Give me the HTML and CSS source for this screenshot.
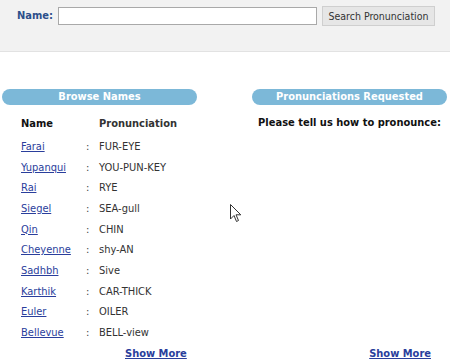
FILE: index.html
```html
<!DOCTYPE html>
<html>
<head>
<meta charset="utf-8">
<link rel="stylesheet" href="styles.css">
</head>
<body>
<div class="header">
  <label class="name-label">Name:</label>
  <input class="name-input" type="text">
  <button class="search-btn">Search Pronunciation</button>
</div>
<div class="main">
  <div class="col left">
    <div class="pill">Browse Names</div>
    <div class="list">
      <div class="row head"><span class="c1">Name</span><span class="c2"></span><span class="c3">Pronunciation</span></div>
      <div class="row"><a class="c1" href="#">Farai</a><span class="c2">:</span><span class="c3">FUR-EYE</span></div>
      <div class="row"><a class="c1" href="#">Yupanqui</a><span class="c2">:</span><span class="c3">YOU-PUN-KEY</span></div>
      <div class="row"><a class="c1" href="#">Rai</a><span class="c2">:</span><span class="c3">RYE</span></div>
      <div class="row"><a class="c1" href="#">Siegel</a><span class="c2">:</span><span class="c3">SEA-gull</span></div>
      <div class="row"><a class="c1" href="#">Qin</a><span class="c2">:</span><span class="c3">CHIN</span></div>
      <div class="row"><a class="c1" href="#">Cheyenne</a><span class="c2">:</span><span class="c3">shy-AN</span></div>
      <div class="row"><a class="c1" href="#">Sadhbh</a><span class="c2">:</span><span class="c3">Sive</span></div>
      <div class="row"><a class="c1" href="#">Karthik</a><span class="c2">:</span><span class="c3">CAR-THICK</span></div>
      <div class="row"><a class="c1" href="#">Euler</a><span class="c2">:</span><span class="c3">OILER</span></div>
      <div class="row"><a class="c1" href="#">Bellevue</a><span class="c2">:</span><span class="c3">BELL-view</span></div>
    </div>
    <div class="more left-more"><a href="#">Show More</a></div>
  </div>
  <div class="col right">
    <div class="pill">Pronunciations Requested</div>
    <div class="please">Please tell us how to pronounce:</div>
    <div class="more right-more"><a href="#">Show More</a></div>
  </div>
</div>
<svg class="cursor" width="12" height="19" viewBox="0 0 12 19"><path d="M0.5 0.5 L0.5 15 L4 11.5 L6.5 17.5 L8.5 16.5 L6 10.8 L10.8 10.8 Z" fill="#fff" stroke="#333" stroke-width="1"/></svg>
</body>
</html>
```
FILE: styles.css
```css
html, body { margin: 0; padding: 0; }
body {
  background: #fff;
  font-family: "DejaVu Sans Condensed", "DejaVu Sans", sans-serif;
  font-size: 11px;
  color: #222;
  width: 450px;
  height: 362px;
  overflow: hidden;
  position: relative;
}
.header {
  background: #f2f2f2;
  height: 52px;
  border-bottom: 1px solid #e2e2e2;
  display: flex;
  align-items: flex-start;
  padding: 6px 0 0 17px;
  box-sizing: border-box;
}
.name-label {
  color: #2c4f8a;
  font-weight: bold;
  font-size: 11px;
  margin-top: 3px;
  width: 41px;
}
.name-input {
  width: 259px;
  height: 18px;
  box-sizing: border-box;
  border: 1px solid #a9a9a9;
  background: #fff;
  margin: 1px 0 0 0;
  padding: 0;
}
.search-btn {
  margin-left: 5px;
  width: 113px;
  height: 20px;
  box-sizing: border-box;
  background: #e6e6e6;
  border: 1px solid #cfcfcf;
  font-family: inherit;
  font-size: 10.5px;
  color: #333;
  padding: 0;
}
.main {
  display: flex;
  justify-content: space-between;
  padding: 37px 3px 0 2px;
}
.col {
  width: 195px;
  display: flex;
  flex-direction: column;
}
.pill {
  height: 16px;
  border-radius: 8px;
  background: #7cb8d8;
  color: #fff;
  font-weight: bold;
  text-align: center;
  line-height: 16px;
  font-size: 11px;
}
.list {
  padding: 10px 0 0 19px;
}
.row {
  display: flex;
  height: 20.7px;
  align-items: center;
}
.row.head { font-weight: bold; color: #111; height: 16px; margin-bottom: 5px; }
.c1 { width: 65px; }
.c2 { width: 13px; color: #444; }
.c3 { color: #333; }
a { color: #2a3e9c; text-decoration: underline; }
.more { font-weight: bold; height: 16px; line-height: 16px; }
.left-more { padding-left: 123px; margin-top: 3px; }
.please {
  font-weight: bold;
  color: #111;
  text-align: center;
  margin-top: 11px;
}
.right-more { text-align: right; padding-right: 16px; margin-top: auto; }
.cursor { position: absolute; left: 230px; top: 204px; }
```
